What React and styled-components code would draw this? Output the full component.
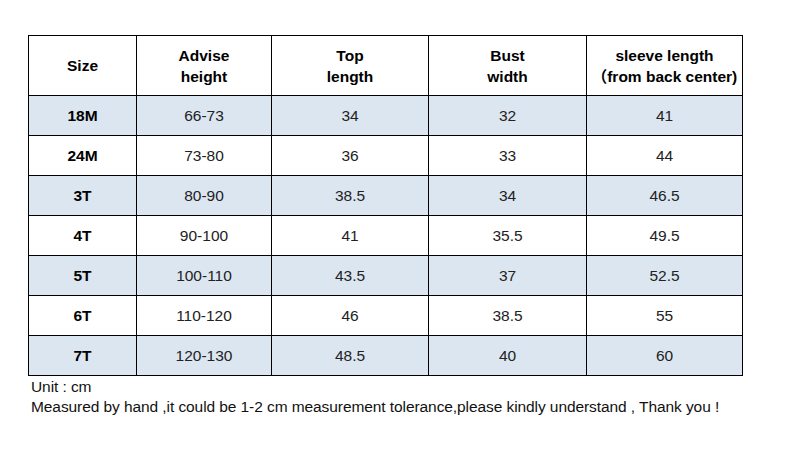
import React from "react";
import styled, { createGlobalStyle } from "styled-components";

const Global = createGlobalStyle`
  html, body { margin: 0; padding: 0; background: #fff; }
  body { font-family: "Liberation Sans", Arial, "Noto Sans CJK SC", sans-serif; }
`;

const Page = styled.div`
  padding: 35px 0 0 28px;
`;

const Grid = styled.div`
  display: inline-grid;
  grid-template-columns: 107px 134px 156px 157px 155px;
  grid-template-rows: 59px repeat(7, 39px);
  gap: 1px;
  padding: 1px;
  background: #000;
`;

const Cell = styled.div`
  display: flex;
  align-items: center;
  justify-content: center;
  text-align: center;
  background: ${(p) => (p.$shade ? "#dce6f1" : "#fff")};
  color: ${(p) => (p.$bold ? "#000" : "#222")};
  font-weight: ${(p) => (p.$bold ? 700 : 400)};
  font-size: 15.5px;
  line-height: 21px;
  white-space: nowrap;
`;

const Notes = styled.div`
  padding: 1px 0 0 3px;
  font-size: 15.5px;
  line-height: 20px;
  color: #111;
  letter-spacing: -0.08px;
  white-space: nowrap;
`;

const headers = [
  ["Size"],
  ["Advise", "height"],
  ["Top", "length"],
  ["Bust", "width"],
  ["sleeve length", "\uFF08from back center)"],
];

const rows = [
  ["18M", "66-73", "34", "32", "41"],
  ["24M", "73-80", "36", "33", "44"],
  ["3T", "80-90", "38.5", "34", "46.5"],
  ["4T", "90-100", "41", "35.5", "49.5"],
  ["5T", "100-110", "43.5", "37", "52.5"],
  ["6T", "110-120", "46", "38.5", "55"],
  ["7T", "120-130", "48.5", "40", "60"],
];

export default function App() {
  return (
    <Page>
      <Global />
      <Grid>
        {headers.map((h, i) => (
          <Cell key={"h" + i} $bold>
            <div>
              {h.map((l, j) => (
                <div key={j}>{l}</div>
              ))}
            </div>
          </Cell>
        ))}
        {rows.map((r, ri) =>
          r.map((v, ci) => (
            <Cell key={ri + "-" + ci} $shade={ri % 2 === 0} $bold={ci === 0}>
              {v}
            </Cell>
          ))
        )}
      </Grid>
      <Notes>
        <div>Unit : cm</div>
        <div>
          Measured by hand ,it could be 1-2 cm measurement tolerance,please kindly understand , Thank you !
        </div>
      </Notes>
    </Page>
  );
}
